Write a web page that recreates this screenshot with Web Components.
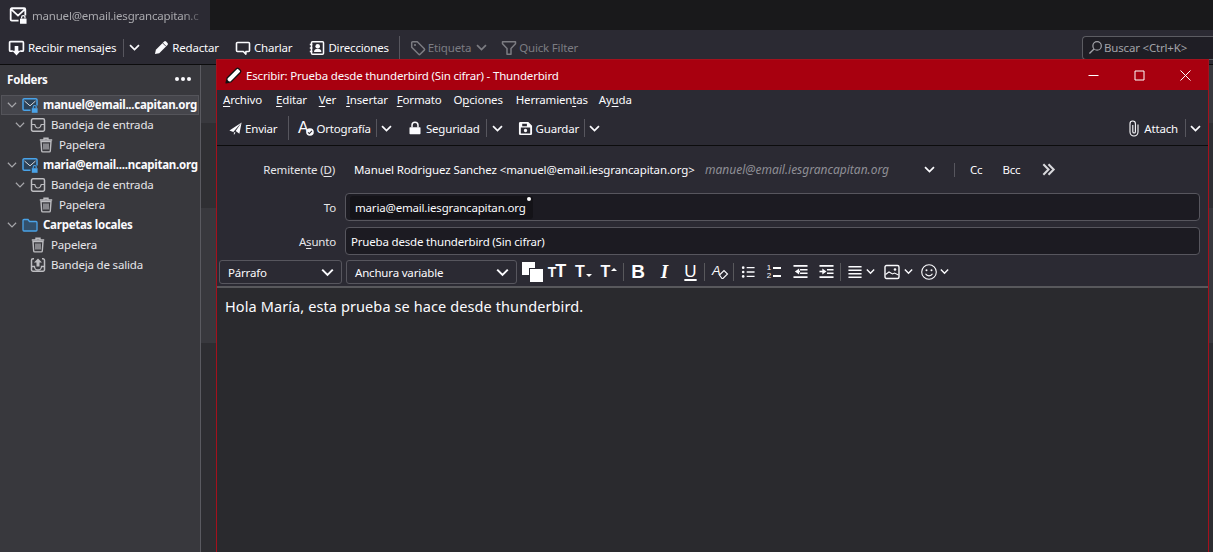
<!DOCTYPE html>
<html lang="es">
<head>
<meta charset="utf-8">
<title>Thunderbird</title>
<style>
  html, body { margin: 0; height: 100%; background: #38383d; overflow: hidden; }
  body { font: 11.5px "Noto Sans", sans-serif; letter-spacing: -.18px; color: #fbfbfe; }
</style>
</head>
<body>
<app-shell>
  <tab-strip slot="tabs">manuel@email.iesgrancapitan.c</tab-strip>
  <main-toolbar slot="toolbar"></main-toolbar>
  <folder-pane slot="folders"></folder-pane>
  <compose-window slot="window"></compose-window>
</app-shell>

<script>
// icon set, all drawn on a 16x16 box
const ICONS = {
  mailLock: `<path d="M8.500 13H2.500a1 1 0 0 1-1-1V3a1 1 0 0 1 1-1h11a1 1 0 0 1 1 1v5.500M2 3l6 5.500L14 3" fill="none" stroke="currentColor" stroke-width="1.600"/><path d="M9.800 11.200h5.800v4.600H9.800z" fill="currentColor"/><path d="M11.200 11.200V10a1.500 1.500 0 0 1 3 0v1.200" fill="none" stroke="currentColor" stroke-width="1.100"/>`,
  acct: `<path d="M8.500 13.300H2.300a1.300 1.300 0 0 1-1.300-1.300V3a1.300 1.300 0 0 1 1.300-1.300h11.400A1.300 1.300 0 0 1 15 3v5.500" fill="#2c4258" stroke="currentColor" stroke-width="1.500"/><path d="M2.500 4l5.500 4.800L13.500 4" fill="none" stroke="#d8d8dc" stroke-width="1"/><path d="M9.800 11.200h5.800v4.600H9.800z" fill="currentColor"/><path d="M11.200 11.200V10a1.500 1.500 0 0 1 3 0v1.200" fill="none" stroke="currentColor" stroke-width="1.100"/>`,
  getMail: `<path d="M4.500 11.500H2.500a1 1 0 0 1-1-1v-7a1 1 0 0 1 1-1h11a1 1 0 0 1 1 1v7a1 1 0 0 1-1 1h-2" fill="none" stroke="currentColor" stroke-width="1.600"/><path d="M6.300 6.500h3.400v4.500H12l-4 4.500-4-4.500h2.300z" fill="currentColor"/>`,
  pencil: `<path d="M1 15l1-4.600L10.800 1.600a1.500 1.500 0 0 1 2.100 0l1.500 1.500a1.500 1.500 0 0 1 0 2.100L5.600 14z" fill="currentColor"/><path d="M9.300 3.200l3.500 3.500" stroke="#2b2a33" stroke-width=".9"/>`,
  pencilTitle: `<path d="M1 15l1-4.600L10.800 1.600a1.500 1.500 0 0 1 2.100 0l1.500 1.500a1.500 1.500 0 0 1 0 2.100L5.600 14z" fill="#fff" stroke="#111" stroke-width="1.200" stroke-linejoin="round"/><path d="M1 15l.7-3.400 2.700 2.700z" fill="#111"/>`,
  chat: `<path d="M2.500 2.500h11a1 1 0 0 1 1 1v7a1 1 0 0 1-1 1h-2.600v2.600L8.300 11.500H2.500a1 1 0 0 1-1-1v-7a1 1 0 0 1 1-1z" fill="none" stroke="currentColor" stroke-width="1.600" stroke-linejoin="round"/>`,
  book: `<path d="M3.500 1.700h10a1 1 0 0 1 1 1v10.600a1 1 0 0 1-1 1h-10a1 1 0 0 1-1-1V2.700a1 1 0 0 1 1-1z" fill="none" stroke="currentColor" stroke-width="1.500"/><circle cx="8.700" cy="6.300" r="2.300" fill="currentColor"/><path d="M5 12c0-2.400 1.600-3.300 3.700-3.300s3.700.9 3.700 3.300z" fill="currentColor"/><path d="M.8 4.500h2.500M.8 8h2.500M.8 11.500h2.500" stroke="currentColor" stroke-width="1.300"/>`,
  tag: `<path d="M1.700 2.700a1 1 0 0 1 1-1h4.600l7 7a1 1 0 0 1 0 1.400l-4.200 4.200a1 1 0 0 1-1.400 0l-7-7z" fill="none" stroke="currentColor" stroke-width="1.500" stroke-linejoin="round"/><circle cx="5" cy="5" r="1.100" fill="currentColor"/>`,
  filter: `<path d="M1.500 1.800h13v2L10 8.500v5.700H6V8.500L1.500 3.800z" fill="none" stroke="currentColor" stroke-width="1.500" stroke-linejoin="round"/>`,
  search: `<circle cx="9.700" cy="6.300" r="4.500" fill="none" stroke="currentColor" stroke-width="1.300"/><path d="M6.400 9.600L1.500 14.500" stroke="currentColor" stroke-width="1.500"/>`,
  chevron: `<path d="M1.500 4.500L8 11l6.500-6.500" fill="none" stroke="currentColor" stroke-width="2.500"/>`,
  twistie: `<path d="M2.500 5l5.500 5.500L13.500 5" fill="none" stroke="currentColor" stroke-width="1.600"/>`,
  inbox: `<path d="M3 1.800h10A1.500 1.500 0 0 1 14.500 3.300v9.400A1.500 1.500 0 0 1 13 14.200H3a1.500 1.500 0 0 1-1.500-1.500V3.300A1.500 1.500 0 0 1 3 1.800z" fill="none" stroke="currentColor" stroke-width="1.500"/><path d="M1.500 7.500h3.300c.5 2.700 1.700 3.500 3.200 3.500s2.700-.8 3.200-3.500h3.300" fill="none" stroke="currentColor" stroke-width="1.200"/>`,
  outbox: `<path d="M4 1.800H3a1.500 1.500 0 0 0-1.500 1.500v9.400A1.500 1.500 0 0 0 3 14.200h10a1.500 1.500 0 0 0 1.500-1.500V3.300A1.500 1.500 0 0 0 13 1.800h-1" fill="none" stroke="currentColor" stroke-width="1.500"/><path d="M1.500 9.500h3a3.300 3.300 0 0 0 7 0h3" fill="none" stroke="currentColor" stroke-width="1.300"/><path d="M8 1.500l4 4H9.500v4h-3v-4H4z" fill="currentColor"/>`,
  trash: `<path d="M6 2.500V1.300h4v1.200M1.800 3h12.400" fill="none" stroke="currentColor" stroke-width="1.400"/><path d="M3 4.500h10l-.7 9.500a1 1 0 0 1-1 .9H4.700a1 1 0 0 1-1-.9z" fill="none" stroke="currentColor" stroke-width="1.400"/><path d="M6 6.500v6M8 6.500v6M10 6.500v6" stroke="currentColor" stroke-width="1.200"/>`,
  folder: `<path d="M1 3.500a1 1 0 0 1 1-1h4l1.500 2H14a1 1 0 0 1 1 1v7.500a1 1 0 0 1-1 1H2a1 1 0 0 1-1-1z" fill="#33506b" stroke="#4aa3e8" stroke-width="1.300"/>`,
  send: `<path d="M15.500 .5L.5 10.500l4.800 1.700zM15.500 .5l-2.700 14L8.200 11zM6 12.500v3.500l2-3z" fill="currentColor"/>`,
  spell: `<text x="0" y="12.500" font-family="Liberation Sans" font-size="16" fill="currentColor">A</text><circle cx="12" cy="12" r="3.800" fill="currentColor"/><path d="M10 12.400l1.400 1.200 2.500-2.800" fill="none" stroke="#2b2a33" stroke-width="1.100"/>`,
  lock: `<path d="M2.500 7h11a.8.8 0 0 1 .8.8v6.400a.8.8 0 0 1-.8.8h-11a.8.8 0 0 1-.8-.8V7.800a.8.8 0 0 1 .8-.8z" fill="currentColor"/><path d="M4.600 7.500V4.700a3.400 3.400 0 0 1 6.800 0v2.800" fill="none" stroke="currentColor" stroke-width="1.700"/>`,
  save: `<path fill-rule="evenodd" d="M2.500 1h8.500l4 4v8.500a1.500 1.500 0 0 1-1.500 1.500h-11A1.500 1.500 0 0 1 1 13.500v-11A1.500 1.500 0 0 1 2.500 1zM4.500 2.800v2.700h5V2.800zM3 7v6.200h10V7zM8 8.300a1.800 1.800 0 1 1 0 3.600 1.800 1.800 0 0 1 0-3.600z" fill="currentColor"/>`,
  clip: `<path d="M12 4.500v7.500a4 4 0 0 1-8 0V3.700a2.700 2.700 0 0 1 5.400 0v8a1.300 1.300 0 0 1-2.600 0V5" fill="none" stroke="currentColor" stroke-width="1.100"/>`,
  dbl: `<path d="M2.500 2.500L8 8l-5.500 5.500M8 2.500L13.500 8 8 13.500" fill="none" stroke="currentColor" stroke-width="2.200"/>`,
  eraser: `<text x="0" y="11" font-family="Liberation Sans" font-style="italic" font-size="13" fill="currentColor">A</text><path d="M7.500 11l4.500-4.500 3.500 3.500-4.500 4.500h-1z" fill="#2b2a33" stroke="currentColor" stroke-width="1.100"/>`,
  bullets: `<circle cx="2.500" cy="3" r="1.500" fill="currentColor"/><circle cx="2.500" cy="8" r="1.500" fill="currentColor"/><circle cx="2.500" cy="13" r="1.500" fill="currentColor"/><path d="M6.500 3h9M6.500 8h9M6.500 13h9" stroke="currentColor" stroke-width="1.700"/>`,
  outdent: `<path d="M.5 2h15M7.500 6.200h8M7.500 9.800h8M.5 14h15" stroke="currentColor" stroke-width="1.700"/><path d="M6.500 4.800L2 8l4.500 3.200z" fill="currentColor"/><path d="M5 8h2.500" stroke="currentColor" stroke-width="1.700"/>`,
  indent: `<path d="M.5 2h15M8.500 6.200h7M8.500 9.800h7M.5 14h15" stroke="currentColor" stroke-width="1.700"/><path d="M3.500 4.800L8 8l-4.500 3.200z" fill="currentColor"/><path d="M.5 8h4" stroke="currentColor" stroke-width="1.700"/>`,
  align: `<path d="M.5 2h15M.5 6h15M.5 10h15M.5 14h15" stroke="currentColor" stroke-width="1.700"/>`,
  image: `<path d="M2.500 1.500h11A1.500 1.500 0 0 1 15 3v10a1.500 1.500 0 0 1-1.500 1.500h-11A1.500 1.500 0 0 1 1 13V3a1.500 1.500 0 0 1 1.500-1.500z" fill="none" stroke="currentColor" stroke-width="1.400"/><path d="M1.500 10.500l3.500-2.500 3.500 2 2-1 4 2" fill="none" stroke="currentColor" stroke-width="1.100"/><circle cx="11" cy="5.500" r="1.300" fill="currentColor"/>`,
  smile: `<circle cx="8" cy="8" r="7.300" fill="none" stroke="currentColor" stroke-width="1.100"/><circle cx="5.500" cy="6.300" r="1" fill="currentColor"/><circle cx="10.500" cy="6.300" r="1" fill="currentColor"/><path d="M4.500 9.800a4 4 0 0 0 7 0" fill="none" stroke="currentColor" stroke-width="1.100"/>`
};

class TbIcon extends HTMLElement {
  connectedCallback() {
    const size = this.getAttribute("size") || 16;
    this.attachShadow({ mode: "open" }).innerHTML = `
      <style>
        :host { display: inline-flex; flex: none; width: ${size}px; height: ${size}px; }
        svg { width: 100%; height: 100%; display: block; overflow: visible; }
      </style>
      <svg viewBox="0 0 16 16">${ICONS[this.getAttribute("name")] || ""}</svg>`;
  }
}
customElements.define("tb-icon", TbIcon);

// vertical rule between toolbar groups
class TbSep extends HTMLElement {
  connectedCallback() {
    this.attachShadow({ mode: "open" }).innerHTML = `
      <style>
        :host { display: block; flex: none; width: 1px; height: var(--sep-h, 18px); background: var(--sep-c, #57565e); }
      </style>`;
  }
}
customElements.define("tb-sep", TbSep);

// icon + label button
class TbButton extends HTMLElement {
  connectedCallback() {
    const icon = this.getAttribute("icon");
    this.attachShadow({ mode: "open" }).innerHTML = `
      <style>
        :host { display: inline-flex; flex: none; align-items: center; gap: var(--btn-gap, 3px); white-space: nowrap; }
      </style>
      <tb-icon name="${icon}" size="${this.getAttribute("size") || 16}"></tb-icon><slot></slot>`;
  }
}
customElements.define("tb-button", TbButton);

class AppShell extends HTMLElement {
  constructor() {
    super();
    this.attachShadow({ mode: "open" }).innerHTML = `
      <style>
        :host { display: grid; grid-template: 30px 35px 1fr / 201px 1fr; width: 1213px; height: 552px; position: relative; overflow: hidden; }
        .tabs { grid-column: 1 / 3; }
        .bar { grid-column: 1 / 3; }
        .side { border-right: 1px solid #5a5a60; min-height: 0; }
        .behind { display: grid; grid-template-rows: 58px 85px 135px 1fr; }
        .behind div:nth-child(1) { background: #38383d; }
        .behind div:nth-child(2) { background: #2f2f33; }
        .behind div:nth-child(3) { background: #38383d; }
        .behind div:nth-child(4) { background: #2d2d31; }
        ::slotted([slot=window]) { position: absolute; left: 216px; top: 59px; width: 993px; height: 493px; }
      </style>
      <div class="tabs"><slot name="tabs"></slot></div>
      <div class="bar"><slot name="toolbar"></slot></div>
      <div class="side"><slot name="folders"></slot></div>
      <div class="behind"><div></div><div></div><div></div><div></div></div>
      <slot name="window"></slot>`;
  }
}
customElements.define("app-shell", AppShell);

class TabStrip extends HTMLElement {
  constructor() {
    super();
    this.attachShadow({ mode: "open" }).innerHTML = `
      <style>
        :host { display: block; height: 30px; background: #19191b; }
        .tab { width: 210px; height: 30px; box-sizing: border-box; background: #2b2a33; display: flex; align-items: center; gap: 5px; padding-left: 9px; }
        .label { font-size: 11.5px; letter-spacing: -.2px; color: #a9a9ae; white-space: nowrap; overflow: hidden; width: 168px; -webkit-mask-image: linear-gradient(to right, #000 90%, rgba(0,0,0,.25) 100%); }
      </style>
      <div class="tab"><tb-icon name="mailLock" size="18"></tb-icon><span class="label"><slot></slot></span></div>`;
  }
}
customElements.define("tab-strip", TabStrip);

class MainToolbar extends HTMLElement {
  constructor() {
    super();
    this.attachShadow({ mode: "open" }).innerHTML = `
      <style>
        :host { display: flex; align-items: center; height: 35px; box-sizing: border-box; padding: 1px 0 0 8px; background: #2b2a33; border-bottom: 1px solid #0c0c0d; }
        .dim { color: #7c7c82; }
        .search { margin-left: auto; width: 131px; height: 24px; box-sizing: border-box; border: 1px solid #5c5c62; border-right: 0; border-radius: 4px 0 0 4px; background: #1f1e25; color: #a2a2a8; display: flex; align-items: center; gap: 1px; padding-left: 5px; white-space: nowrap; }
      </style>
      <tb-button icon="getMail" size="17" style="margin-right:7px">Recibir mensajes</tb-button>
      <tb-sep></tb-sep>
      <tb-icon name="chevron" size="11" style="margin:0 14px 0 5px"></tb-icon>
      <tb-button icon="pencil" size="15" style="margin-right:16px">Redactar</tb-button>
      <tb-button icon="chat" style="margin-right:17px">Charlar</tb-button>
      <tb-button icon="book" style="margin-right:10px">Direcciones</tb-button>
      <tb-sep style="--sep-h:24px"></tb-sep>
      <tb-button class="dim" icon="tag" style="margin-left:10px;--btn-gap:2px">Etiqueta</tb-button>
      <tb-icon class="dim" name="chevron" size="11" style="margin:0 14px 0 5px"></tb-icon>
      <tb-button class="dim" icon="filter" style="--btn-gap:2px">Quick Filter</tb-button>
      <div class="search"><tb-icon name="search" size="15"></tb-icon>Buscar &lt;Ctrl+K&gt;</div>`;
  }
}
customElements.define("main-toolbar", MainToolbar);

class FolderRow extends HTMLElement {
  connectedCallback() {
    const depth = +this.getAttribute("depth") || 0;
    const icon = this.getAttribute("icon");
    const account = this.hasAttribute("account");
    this.attachShadow({ mode: "open" }).innerHTML = `
      <style>
        :host { display: flex; align-items: center; height: 20px; box-sizing: border-box; padding-left: ${depth * 8 + 6}px; padding-bottom: 1px; white-space: nowrap; overflow: hidden; font-weight: ${account ? 700 : 400}; color: ${account ? "#fbfbfe" : "#e6e6ea"}; letter-spacing: ${account ? "-.26px" : "-.18px"}; }
        :host([selected]) { background: #45454b; outline: 1px solid #54545a; outline-offset: -1px; margin: 0 1px; padding-left: ${depth * 8 + 5}px; }
        .tw { width: 12px; margin-right: 4px; color: #a6a6aa; display: flex; }
        .ic { margin-right: 5px; color: #bdbdc1; display: flex; }
        :host([account]) .ic { color: #4aa3e8; }
        :host([leaf]) .tw { visibility: hidden; }
      </style>
      <span class="tw"><tb-icon name="twistie" size="12"></tb-icon></span>
      <span class="ic"><tb-icon name="${icon}" size="16"></tb-icon></span><slot></slot>`;
  }
}
customElements.define("folder-row", FolderRow);

class FolderPane extends HTMLElement {
  constructor() {
    super();
    this.attachShadow({ mode: "open" }).innerHTML = `
      <style>
        :host { display: block; background: #38383d; height: 100%; }
        header { height: 30px; box-sizing: border-box; padding: 0 9px 2px 7px; display: flex; align-items: center; justify-content: space-between; font-weight: 700; }
        .dots { display: flex; gap: 2px; }
        .dots i { width: 4px; height: 4px; border-radius: 50%; background: #fbfbfe; }
      </style>
      <header>Folders<span class="dots"><i></i><i></i><i></i></span></header>
      <folder-row depth="0" icon="acct" account open selected>manuel@email...capitan.org</folder-row>
      <folder-row depth="1" icon="inbox" open>Bandeja de entrada</folder-row>
      <folder-row depth="2" icon="trash" leaf>Papelera</folder-row>
      <folder-row depth="0" icon="acct" account open>maria@email....ncapitan.org</folder-row>
      <folder-row depth="1" icon="inbox" open>Bandeja de entrada</folder-row>
      <folder-row depth="2" icon="trash" leaf>Papelera</folder-row>
      <folder-row depth="0" icon="folder" account open>Carpetas locales</folder-row>
      <folder-row depth="1" icon="trash" leaf>Papelera</folder-row>
      <folder-row depth="1" icon="outbox" leaf>Bandeja de salida</folder-row>`;
  }
}
customElements.define("folder-pane", FolderPane);

class WindowTitle extends HTMLElement {
  constructor() {
    super();
    this.attachShadow({ mode: "open" }).innerHTML = `
      <style>
        :host { display: flex; align-items: center; height: 30px; background: #a8000f; padding-left: 8px; white-space: nowrap; }
        .t { margin-left: 4px; flex: 1; }
        .ctl { width: 46px; height: 30px; display: flex; align-items: center; justify-content: center; }
        .ctl svg { width: 11px; height: 11px; }
      </style>
      <tb-icon name="pencilTitle" size="17"></tb-icon>
      <span class="t"><slot></slot></span>
      <span class="ctl"><svg viewBox="0 0 11 11"><path d="M.5 5.500h10" stroke="#fff"/></svg></span>
      <span class="ctl"><svg viewBox="0 0 11 11"><path d="M1 1h9v9H1z" fill="none" stroke="#fff"/></svg></span>
      <span class="ctl"><svg viewBox="0 0 11 11"><path d="M.5.500l10 10M10.500.500l-10 10" stroke="#fff"/></svg></span>`;
  }
}
customElements.define("window-title", WindowTitle);

class ComposeToolbar extends HTMLElement {
  constructor() {
    super();
    this.attachShadow({ mode: "open" }).innerHTML = `
      <style>
        :host { display: flex; align-items: center; height: 36px; box-sizing: border-box; padding: 1px 0 0 12px; border-bottom: 1px solid #0c0c0d; }
        .end { margin-left: auto; }
      </style>
      <tb-button icon="send" size="13" style="margin-right:11px">Enviar</tb-button>
      <tb-sep style="--sep-h:24px"></tb-sep>
      <tb-button icon="spell" style="--btn-gap:2px;margin:0 5px 0 9px">Ortografía</tb-button>
      <tb-sep></tb-sep>
      <tb-icon name="chevron" size="11" style="margin:0 16px 0 4px"></tb-icon>
      <tb-button icon="lock" size="14" style="--btn-gap:4px;margin-right:6px">Seguridad</tb-button>
      <tb-sep></tb-sep>
      <tb-icon name="chevron" size="11" style="margin:0 15px 0 5px"></tb-icon>
      <tb-button icon="save" size="15" style="margin-right:5px">Guardar</tb-button>
      <tb-sep></tb-sep>
      <tb-icon name="chevron" size="11" style="margin-left:4px"></tb-icon>
      <tb-button class="end" icon="clip" style="--btn-gap:2px;margin-right:7px">Attach</tb-button>
      <tb-sep></tb-sep>
      <tb-icon name="chevron" size="11" style="margin:0 7px 0 4px"></tb-icon>`;
  }
}
customElements.define("compose-toolbar", ComposeToolbar);

class HeaderField extends HTMLElement {
  connectedCallback() {
    this.attachShadow({ mode: "open" }).innerHTML = `
      <style>
        :host { display: grid; grid-template-columns: 119px 1fr; column-gap: 9px; align-items: center; height: 28px; margin-right: 8px; }
        .l { text-align: right; white-space: nowrap; color: #e6e6ea; }
        .box { box-sizing: border-box; height: 28px; border: 1px solid #57565e; border-radius: 4px; background: #1c1b22; display: flex; align-items: center; padding-left: var(--pad, 5px); white-space: nowrap; }
      </style>
      <span class="l"><slot name="label"></slot></span>
      <div class="box"><slot></slot></div>`;
  }
}
customElements.define("header-field", HeaderField);

class RecipientPill extends HTMLElement {
  constructor() {
    super();
    this.attachShadow({ mode: "open" }).innerHTML = `
      <style>
        :host { display: inline-flex; align-items: center; height: 23px; padding: 0 7px 0 5px; border-radius: 3px; background: #141318; position: relative; }
        i { position: absolute; right: 2px; top: 1px; width: 4px; height: 4px; border-radius: 50%; background: #fff; }
      </style>
      <slot></slot><i></i>`;
  }
}
customElements.define("recipient-pill", RecipientPill);

class FormatSelect extends HTMLElement {
  connectedCallback() {
    this.attachShadow({ mode: "open" }).innerHTML = `
      <style>
        :host { display: flex; flex: none; align-items: center; justify-content: space-between; box-sizing: border-box; width: ${this.getAttribute("w")}px; height: 24px; border: 1px solid #57565e; border-radius: 3px; padding: 1px 7px 0 8px; white-space: nowrap; }
      </style>
      <slot></slot><tb-icon name="chevron" size="13"></tb-icon>`;
  }
}
customElements.define("format-select", FormatSelect);

class FormatBar extends HTMLElement {
  constructor() {
    super();
    this.attachShadow({ mode: "open" }).innerHTML = `
      <style>
        :host { display: flex; align-items: center; height: 30px; box-sizing: border-box; padding: 0 0 1px 2px; border-bottom: 2px solid #58585c; --sep-c: #58585c; }
        .colors { position: relative; flex: none; width: 21px; height: 20px; margin-left: 5px; }
        .colors i { position: absolute; width: 13px; height: 13px; background: #fff; }
        .colors i:first-child { left: 0; top: 0; }
        .colors i:last-child { right: 0; bottom: 0; outline: 1px solid #2b2a33; }
        .g { flex: none; font-family: "Liberation Sans", sans-serif; color: #fff; line-height: 16px; text-align: center; letter-spacing: 0; }
        .b { font-weight: 700; font-size: 19px; width: 14px; }
        .i { font-style: italic; font-size: 19px; font-family: "Liberation Serif", serif; font-weight: 700; width: 11px; }
        .u { font-size: 17px; width: 13px; text-decoration: underline; text-decoration-thickness: 2px; text-underline-offset: 2px; }
        .t { display: flex; flex: none; align-items: baseline; justify-content: center; font-family: "Liberation Sans", sans-serif; line-height: 16px; letter-spacing: 0; }
        .t b { font-weight: 700; }
        .num { position: relative; width: 15px; height: 16px; flex: none; font: 8px/8px "Liberation Sans", sans-serif; letter-spacing: 0; }
        .num span { display: block; width: 6px; text-align: center; }
        .num i { position: absolute; left: 7px; width: 8px; height: 2px; background: #fff; }
        .tri { width: 0; height: 0; border: 3px solid transparent; }
      </style>
      <format-select w="123">Párrafo</format-select>
      <format-select w="171" style="margin-left:4px">Anchura variable</format-select>
      <span class="colors"><i></i><i></i></span>
      <span class="t" style="width:16px;margin-left:6px"><b style="font-size:14px;margin-right:-1px">T</b><b style="font-size:18px">T</b></span>
      <span class="t" style="width:17px;margin-left:10px"><b style="font-size:16px">T</b><span class="tri" style="border-top-color:#fff;border-bottom:0;margin-left:1px"></span></span>
      <span class="t" style="width:16px;margin-left:9px"><b style="font-size:16px">T</b><span class="tri" style="border-bottom-color:#fff;border-top:0;align-self:flex-start;margin:4px 0 0 1px"></span></span>
      <tb-sep style="margin-left:6px"></tb-sep>
      <span class="g b" style="margin-left:7px">B</span>
      <span class="g i" style="margin-left:14px">I</span>
      <span class="g u" style="margin-left:14px">U</span>
      <tb-sep style="margin-left:7px"></tb-sep>
      <tb-icon name="eraser" style="margin-left:7px"></tb-icon>
      <tb-sep style="margin-left:5px"></tb-sep>
      <tb-icon name="bullets" size="14" style="margin-left:7px"></tb-icon>
      <span class="num" style="margin-left:11px"><span>1</span><span>2</span><i style="top:3px"></i><i style="top:11px"></i></span>
      <tb-icon name="outdent" size="15" style="margin-left:12px"></tb-icon>
      <tb-icon name="indent" size="15" style="margin-left:11px"></tb-icon>
      <tb-sep style="margin-left:6px"></tb-sep>
      <tb-icon name="align" size="14" style="margin-left:7px"></tb-icon>
      <tb-icon name="chevron" size="9" style="margin-left:4px"></tb-icon>
      <tb-icon name="image" size="16" style="margin-left:9px"></tb-icon>
      <tb-icon name="chevron" size="9" style="margin-left:4px"></tb-icon>
      <tb-icon name="smile" size="16" style="margin-left:8px"></tb-icon>
      <tb-icon name="chevron" size="9" style="margin-left:3px"></tb-icon>`;
  }
}
customElements.define("format-bar", FormatBar);

class ComposeWindow extends HTMLElement {
  constructor() {
    super();
    this.attachShadow({ mode: "open" }).innerHTML = `
      <style>
        :host { display: flex; flex-direction: column; box-sizing: border-box; border: 1px solid #a5101c; border-bottom: 0; background: #2b2a33; overflow: hidden; }
        .menu { display: flex; height: 20px; box-sizing: border-box; padding: 0 0 2px 6px; align-items: center; white-space: nowrap; }
        .menu span { margin-right: 12px; }
        .from { display: flex; align-items: center; height: 47px; white-space: nowrap; }
        .from .l { width: 118px; text-align: right; color: #e6e6ea; flex: none; }
        .from .who { margin-left: 19px; width: 343px; flex: none; letter-spacing: -.115px; }
        .from em { color: #8f8f96; margin-left: 8px; width: 200px; flex: none; font-size: 12px; letter-spacing: 0; }
        .fields { display: flex; flex-direction: column; gap: 6px; }
        .body { flex: 1; background: #2a2a2e; font-size: 14.5px; letter-spacing: .1px; padding: 8px 8px; white-space: nowrap; }
        u { text-underline-offset: 2px; text-decoration-thickness: 1px; }
      </style>
      <window-title>Escribir: Prueba desde thunderbird (Sin cifrar) - Thunderbird</window-title>
      <nav class="menu">
        <span style="margin-right:14px"><u>A</u>rchivo</span><span><u>E</u>ditar</span><span style="margin-right:10px"><u>V</u>er</span><span style="margin-right:9px"><u>I</u>nsertar</span><span><u>F</u>ormato</span><span style="margin-right:13px">O<u>p</u>ciones</span><span style="margin-right:11px">Herramien<u>t</u>as</span><span>Ay<u>u</u>da</span>
      </nav>
      <compose-toolbar></compose-toolbar>
      <div class="from">
        <span class="l">Remitente (<u>D</u>)</span>
        <span class="who">Manuel Rodriguez Sanchez &lt;manuel@email.iesgrancapitan.org&gt;</span>
        <em>manuel@email.iesgrancapitan.org</em>
        <tb-icon name="chevron" size="11" style="margin-left:19px"></tb-icon>
        <tb-sep style="--sep-h:14px;margin-left:19px"></tb-sep>
        <span style="margin-left:15px">Cc</span>
        <span style="margin-left:20px">Bcc</span>
        <tb-icon name="dbl" size="15" style="margin-left:21px;color:#d8d8dc"></tb-icon>
      </div>
      <div class="fields">
        <header-field style="--pad:4px"><span slot="label">To</span><recipient-pill>maria@email.iesgrancapitan.org</recipient-pill></header-field>
        <header-field><span slot="label">A<u>s</u>unto</span>Prueba desde thunderbird (Sin cifrar)</header-field>
      </div>
      <format-bar style="margin-top:3px"></format-bar>
      <div class="body">Hola María, esta prueba se hace desde thunderbird.</div>`;
  }
}
customElements.define("compose-window", ComposeWindow);
</script>
</body>
</html>
